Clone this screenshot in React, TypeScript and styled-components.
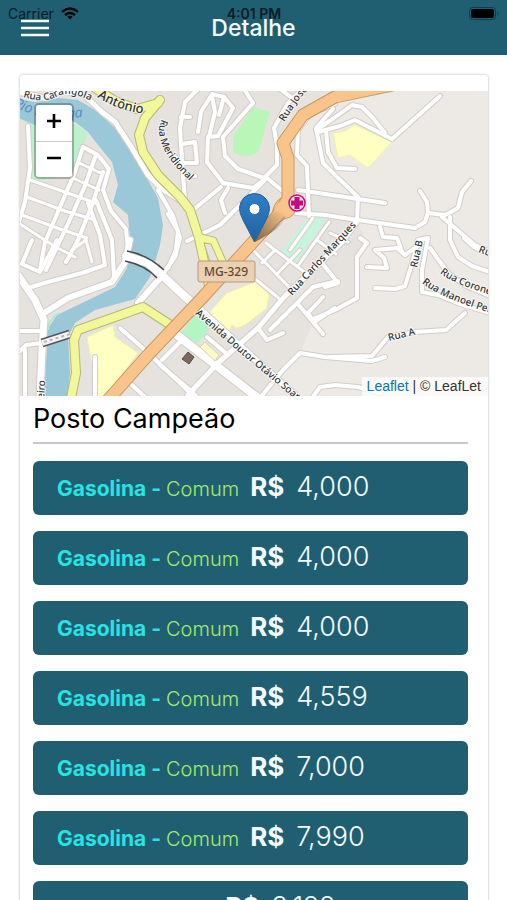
import React from "react";
import styled, { createGlobalStyle } from "styled-components";

const teal = "#205f72";

const GlobalStyle = createGlobalStyle`
  *, *::before, *::after { box-sizing: border-box; }
  html { height: 100%; overflow: hidden; }
  body {
    margin: 0;
    height: 100%;
    overflow: hidden;
    background: #fff;
    color: #000;
    font-family: Inter, "Liberation Sans", sans-serif;
  }
`;

/* ---------- header ---------- */

const Header = styled.header`
  position: relative;
  background: ${teal};
  height: 55px;
`;

const StatusBar = styled.div`
  position: absolute;
  inset: 0 0 auto 0;
  display: grid;
  grid-template-columns: 1fr auto 1fr;
  align-items: center;
  height: 27px;
  padding: 0 7px 0 8px;
  font-size: 14px;
  line-height: 27px;
  color: #0b1c24;
  pointer-events: none;
`;

const Carrier = styled.span`
  display: flex;
  align-items: center;
  gap: 7px;
`;

const Clock = styled.span`
  font-weight: 600;
`;

const BatteryIcon = styled.svg`
  justify-self: end;
`;

const NavBar = styled.div`
  display: grid;
  grid-template-columns: 1fr auto 1fr;
  align-items: center;
  height: 55px;
  padding: 0 21px;
`;

const MenuButton = styled.button`
  justify-self: start;
  display: block;
  border: 0;
  padding: 0;
  background: none;
  line-height: 0;
  cursor: pointer;
`;

const Title = styled.h1`
  margin: 0;
  font-size: 23px;
  font-weight: 500;
  line-height: 28px;
  color: #f4fbff;
`;

/* ---------- card ---------- */

const Card = styled.main`
  margin: 20px 19px 0 20px;
  padding-top: 16px;
  border-radius: 3px;
  box-shadow: 0 0 3px rgba(0, 0, 0, 0.3);
`;

const MapFrame = styled.section`
  position: relative;
  height: 305px;
  overflow: hidden;
  background: #edeae6;
`;

const MapDrawing = styled.svg`
  display: block;
  width: 100%;
  height: 100%;
`;

const ZoomControl = styled.div`
  position: absolute;
  top: 12px;
  left: 14px;
  display: grid;
  width: 40px;
  border: 2px solid rgba(0, 0, 0, 0.25);
  border-radius: 5px;
  background-clip: padding-box;
  overflow: hidden;
`;

const ZoomButton = styled.button`
  display: grid;
  place-items: center;
  height: 36px;
  padding: 0 0 4px;
  border: 0;
  background: #fff;
  cursor: pointer;

  & + & {
    border-top: 1px solid #ccc;
  }
`;

const Attribution = styled.div`
  position: absolute;
  right: 0;
  bottom: 0;
  padding: 0 7px 0 5px;
  background: rgba(255, 255, 255, 0.75);
  color: #333;
  font-family: "Liberation Sans", sans-serif;
  font-size: 14px;
  line-height: 19px;
`;

const AttributionLink = styled.a`
  color: #0078a8;
  text-decoration: none;
`;

const Details = styled.section`
  padding: 0 20px 0 13px;
`;

const StationName = styled.h2`
  margin: 0;
  border-bottom: 2px solid #c8c8c8;
  font-size: 27px;
  font-weight: 400;
  line-height: 46px;
`;

const PriceList = styled.ul`
  display: grid;
  gap: 16px;
  margin: 17px 0 0;
  padding: 0;
  list-style: none;
`;

const PriceRow = styled.li`
  display: flex;
  align-items: baseline;
  height: 54px;
  padding: 0 24px;
  border-radius: 6px;
  background: ${teal};
  line-height: 52px;
  white-space: nowrap;
`;

const Fuel = styled.strong`
  margin-right: 5px;
  font-size: 21px;
  font-weight: 700;
  color: #29e3e3;
`;

const Grade = styled.span`
  font-size: 20px;
  font-weight: 350;
  color: #a5ea6c;
`;

const Currency = styled.strong`
  margin: 0 12px 0 11px;
  font-size: 26px;
  font-weight: 700;
  color: #f4fbff;
`;

const Price = styled.span`
  font-size: 27px;
  font-weight: 300;
  color: #f4fbff;
`;

/* ---------- map data ---------- */

type Road = [path: string, width: number];

const streets: Road[] = [
  ["M18 92 L45 98 L60 91 L82 93 L102 112 L115 122 L132 148 L148 175 L162 189 L181 201", 5],
  ["M158 190 L173 216 L180 238 L175 257 L162 275", 4],
  ["M28 126 L30 168 L25 202 L18 225", 4],
  ["M83 147 L75 172 L60 207 L45 242 L40 270", 4],
  ["M96 155 L84 188 L72 215 L57 247 L46 270", 4],
  ["M103 172 L92 205 L78 240 L66 262", 4],
  ["M83 147 L98 155 L109 169 L103 190 L111 211 L126 229 L128 250", 4],
  ["M30 180 L62 191 L98 204", 3],
  ["M27 197 L65 211 L92 219", 3],
  ["M22 215 L60 229 L87 238", 3],
  ["M20 224 L54 246 L75 257", 3],
  ["M79 163 L103 174", 3],
  ["M73 178 L99 190", 3],
  ["M88 203 L100 235 L105 265 L82 273 L48 282 L28 288", 4],
  ["M96 200 L112 240 L114 277", 4],
  ["M57 240 L40 272 L22 264 L32 240", 4],
  ["M72 250 L86 240 L92 262", 3],
  ["M18 275 L35 300 L44 320 L42 350 L40 398", 7],
  ["M44 313 L68 298 L112 282 L125 262 L130 240", 6],
  ["M18 331 L42 331", 4],
  ["M18 353 L26 345 L42 343 M25 350 L25 398", 4],
  ["M126 256 L148 263 L162 275 L180 292 L200 310", 8],
  ["M162 276 L138 303", 6],
  ["M120 328 L145 350 L180 383 L195 398", 4],
  ["M132 385 L146 398 M95 357 L95 398", 4],
  ["M177 335 L258 398", 8],
  ["M195 305 L298 398", 6],
  ["M180 342 L162 360 M160 365 L190 390 L198 398", 4],
  ["M197 90 L185 102 L180 128 L183 175 L185 200", 4],
  ["M182 144 L195 142 L197 163 L183 163 M181 117 L190 117 M183 175 L195 176 M170 153 L183 163", 4],
  ["M198 132 L201 112 L212 94 L224 97 L233 108 L218 136 L208 137 L207 162 L223 183 L253 188 L267 178 L284 192", 4],
  ["M212 96 L215 112 L209 137 M224 97 L219 115", 4],
  ["M244 89 L253 103 L223 137 L225 156 L238 169 L264 178 L277 165 L277 145 L274 128 L288 103 L302 90", 4],
  ["M276 86 L291 97", 4],
  ["M221 187 L193 210 M228 188 L221 200 L225 213 M264 181 L220 225 L187 241", 4],
  ["M168 214 L178 231 L176 250 L168 268", 4],
  ["M335 104 L310 114 L298 130 L297 155 L307 166 L309 216", 4],
  ["M333 109 L316 128 L323 163 L335 175 L358 197 L357 221", 4],
  ["M316 130 L334 118 L352 105 L362 107 L373 118 L385 133", 4],
  ["M318 132 L340 126 L355 120 L392 139 L440 96", 4],
  ["M326 130 L328 152 L337 168 L355 169", 4],
  ["M298 190 L325 194 L385 203", 4],
  ["M296 213 L325 215 L358 220 L415 228 L425 222 L428 213 L445 215 L458 208 L462 192 L471 181", 4],
  ["M428 213 L427 202 L420 191 M442 217 L475 245 L490 252", 4],
  ["M450 217 L450 240 L458 257 L472 266 L490 272", 4],
  ["M380 227 L383 237 L397 238 L402 252", 4],
  ["M357 221 L342 242 L284 297 L258 328 L218 363 L188 395", 5],
  ["M313 218 L290 250 M298 266 L329 222 M330 233 L348 242 M317 240 L336 254", 3],
  ["M253 250 L290 288 M266 243 L307 274 M262 263 L274 251 M277 274 L300 250 M253 277 L281 300", 3],
  ["M258 328 L267 340 L283 333", 4],
  ["M325 287 L338 283 L322 263 M338 281 L313 287 L293 307 L270 330", 4],
  ["M297 303 L313 322 L323 334 M323 297 L308 313 L314 322 L335 308", 4],
  ["M260 398 L283 370 L300 353 L325 357 L372 361 L385 357 M330 357 L372 356 L388 337 L415 332 L446 330 L465 313", 4],
  ["M312 398 L320 387 L335 385 L358 387 L380 393", 4],
  ["M207 337 L228 355", 4],
  ["M315 318 L335 310 L357 298 L357 257 L367 243 L360 238", 4],
  ["M367 267 L387 268 L384 258 L375 250 L397 248 L405 255 L422 243", 4],
  ["M375 288 L395 289 L405 286 L413 260 L418 240 L428 238 L422 270 L422 292 L438 295 L460 304 L490 313", 4],
  ["M430 248 L448 273 L466 286 L490 296 M464 238 L474 247 L490 255", 4],
];

const yellowRoads: Road[] = [
  ["M92 86 L115 101 L137 109 L158 103", 8],
  ["M160 100 L145 118 L139 135 L143 152 L158 175 L180 197 L190 210 L199 238 L209 285", 8],
  ["M201 238 L213 241 L224 266", 7],
  ["M172 326 L143 307 L115 317 L78 330 L74 340 L76 373 L71 398", 8],
];

const trunkRoads: Road[] = [
  ["M108 400 L148 355 L203 297 L253 242 L280 213 L288 198 L288 158 L283 143 L303 115 L335 97 L397 84", 11],
];

type Label = { id: string; d: string; text: string; size?: number };

const labels: Label[] = [
  { id: "carangola", d: "M23 97 Q44 104 58 96 Q72 89 100 106", text: "Rua Carangola" },
  { id: "antonio", d: "M97 97 Q118 111 148 114", text: "Antônio", size: 13 },
  { id: "meridional", d: "M162 119 Q148 146 200 190", text: "Rua Meridional" },
  { id: "jose", d: "M284 122 L300 98 L322 76", text: "Rua José C" },
  { id: "marques", d: "M292 296 L365 216", text: "Rua Carlos Marques" },
  { id: "avenida", d: "M195 314 L246 358 L330 428", text: "Avenida Doutor Otávio Soares" },
  { id: "ruab", d: "M417 268 L424 236", text: "Rua B" },
  { id: "ruaa", d: "M389 341 L425 332", text: "Rua A" },
  { id: "coronel", d: "M440 273 Q458 288 525 304", text: "Rua Coronel" },
  { id: "manoel", d: "M422 283 Q446 303 535 325", text: "Rua Manoel Pereira" },
  { id: "ru", d: "M478 252 L510 264", text: "Rua" },
  { id: "iro", d: "M44 399 L46 365", text: "eiro" },
];

const RoadLayer = ({ roads, casing, fill }: { roads: Road[]; casing: string; fill: string }) => (
  <g fill="none" strokeLinecap="round" strokeLinejoin="round">
    {roads.map(([d, w]) => (
      <path key={"c" + d} d={d} stroke={casing} strokeWidth={w + 2} />
    ))}
    {roads.map(([d, w]) => (
      <path key={"f" + d} d={d} stroke={fill} strokeWidth={w} />
    ))}
  </g>
);

const StreetMap = () => (
  <MapDrawing viewBox="20 91 468 305" preserveAspectRatio="xMidYMid slice" role="img" aria-label="Mapa do posto">
    <defs>
      <linearGradient id="pin" x1="0" y1="0" x2="0" y2="1">
        <stop offset="0" stopColor="#2e7fcb" />
        <stop offset="1" stopColor="#22639f" />
      </linearGradient>
      <linearGradient id="pinShadow" x1="0" y1="1" x2="1" y2="0">
        <stop offset="0" stopColor="#000" stopOpacity="0.5" />
        <stop offset="1" stopColor="#000" stopOpacity="0" />
      </linearGradient>
    </defs>
    <rect x="20" y="91" width="468" height="305" fill="#edeae6" />
    <path
      d="M18 91 H340 L335 97 L298 130 L297 155 L307 166 L309 192 L358 198 L357 221 L367 243 L357 257 L357 298 L315 318 L300 353 L260 398 H18Z"
      fill="#e6e2de"
    />

    <path d="M18 116 L35 122 L75 124 L88 134 L74 166 L72 175 L31 182 L30 126Z" fill="#bdf0cc" />
    <path d="M253 107 L270 112 L259 150 Q250 161 233 152 V137Z" fill="#b8f7b8" />
    <path d="M307 218 L326 218 L297 262 L281 252Z" fill="#c6f5dc" />
    <path d="M195 315 L211 328 L197 344 L182 332Z" fill="#b4f5c4" />
    <g fill="#ffffc4" stroke="#f3f3a0" strokeWidth="1">
      <path d="M333 133 L345 131 L355 125 L392 142 L368 168 L350 155 L338 158Z" />
      <path d="M208 314 L227 293 L240 288 L255 282 L269 294 L267 308 L245 325 L237 328 L232 325 L228 334 L220 329 Z" />
      <path d="M87 337 L113 325 L115 337 L138 353 L104 398 H98 L93 370Z" />
    </g>

    <path
      d="M18 99 L35 102 L58 98 L78 100 L95 110 L115 128 L132 152 L145 175 L158 198 L163 225 L160 245 L155 262 L150 277 L135 299 L95 310 L75 323 L68 337 L70 373 L67 398 L43 398 L47 350 L47 330 L57 315 L82 303 L115 287 L127 268 L130 240 L128 215 L113 202 L118 185 L112 162 L98 145 L88 132 L75 122 L35 125 L18 118Z"
      fill="#9ac8d8"
    />
    <path d="M48 330 Q48 320 59 313" fill="none" stroke="#a9eccb" strokeWidth="2" />

    <RoadLayer roads={streets} casing="#d1cdca" fill="#fff" />
    <path d="M205 342 L219 355 L215 361 L200 347Z" fill="#fbf9c8" stroke="#d9d5a8" />
    <g fill="none" stroke="#4a4a4a" strokeWidth="1.5">
      <path d="M127 251 Q148 255 164 270 M125 261 Q145 265 157 278" />
    </g>
    <path d="M42 343 L70 334" stroke="#555" strokeWidth="9" />
    <path d="M42 343 L70 334" stroke="#f4f2f2" strokeWidth="6" />
    <path d="M44 342 L70 334" stroke="#b9b4b4" strokeWidth="2" strokeDasharray="3 3" />
    <RoadLayer roads={yellowRoads} casing="#b7b676" fill="#f2f79a" />
    <path d="M204 243 L211 244 L219 262 L210 262Z" fill="#e6e2de" stroke="#b7b676" />
    <path d="M268 230 L273 210 Q276 197 288 196 L296 204 Q297 217 284 219 L274 226Z" fill="#f9c48b" stroke="#c79a59" />
    <RoadLayer roads={trunkRoads} casing="#c79a59" fill="#f9c48b" />
    <path d="M274 212 Q277 200 288 198 L294 204 Q295 215 283 217 L275 222Z" fill="#f9c48b" />
    <path d="M188 352 L194 357 L189 364 L182 359Z" fill="#7a685f" stroke="#5d4e47" />

    <g
      fontFamily='"Noto Sans", "Open Sans", sans-serif'
      fontSize="10"
      fontWeight="500"
      fill="#333"
      stroke="#fff"
      strokeWidth="2"
      strokeOpacity="0.7"
      paintOrder="stroke"
    >
      {labels.map(({ id, d, text, size }) => (
        <React.Fragment key={id}>
          <path id={id} d={d} fill="none" stroke="none" />
          <text fontSize={size}>
            <textPath href={"#" + id}>{text}</textPath>
          </text>
        </React.Fragment>
      ))}
    </g>
    <path id="rio" d="M13 106 Q45 124 96 115" fill="none" />
    <text fontFamily='"Noto Sans", sans-serif' fontSize="14" fontStyle="italic" fill="#5b8fc0">
      <textPath href="#rio">Rio Piranga</textPath>
    </text>

    <rect x="198" y="261" width="57" height="21" rx="2" fill="#ecd0b4" stroke="#b69a7b" />
    <text
      x="226"
      y="276"
      textAnchor="middle"
      fontFamily='"Noto Sans", sans-serif'
      fontSize="12"
      fontWeight="500"
      fill="#5e4a33"
    >
      MG-329
    </text>

    <circle cx="297" cy="203" r="8" fill="#fbe3f1" stroke="#c9077f" strokeWidth="1.5" />
    <path d="M294.500 197 h5 v3.500 h3.500 v5 h-3.500 v3.500 h-5 v-3.500 h-3.500 v-5 h3.500Z" fill="#c9077f" />

    <path d="M255 242 L264 222 Q275 207 284 213 Q287 222 271 233Z" fill="url(#pinShadow)" />
    <path
      d="M254.500 242 L243 220 Q239.500 213 239.500 208.500 A15 15 0 0 1 269.500 208.500 Q269.500 213 266 220Z"
      fill="url(#pin)"
      stroke="#245f9a"
    />
    <circle cx="254.500" cy="209" r="5.500" fill="#fff" stroke="#2467a8" />
  </MapDrawing>
);

const prices = [
  { fuel: "Gasolina", grade: "Comum", price: "4,000" },
  { fuel: "Gasolina", grade: "Comum", price: "4,000" },
  { fuel: "Gasolina", grade: "Comum", price: "4,000" },
  { fuel: "Gasolina", grade: "Comum", price: "4,559" },
  { fuel: "Gasolina", grade: "Comum", price: "7,000" },
  { fuel: "Gasolina", grade: "Comum", price: "7,990" },
  { fuel: "Etanol", grade: "Comum", price: "3,199" },
];

export default function App() {
  return (
    <>
      <GlobalStyle />
      <Header>
        <NavBar>
          <MenuButton type="button" aria-label="Menu">
            <svg width="28" height="18" viewBox="0 0 28 18" stroke="#f4fbff" strokeWidth="2.400">
              <path d="M0 2H28M0 9H28M0 16H28" />
            </svg>
          </MenuButton>
          <Title>Detalhe</Title>
        </NavBar>
        <StatusBar>
          <Carrier>
            Carrier
            <svg width="18" height="13" viewBox="0 0 18 13" fill="none" stroke="#000" strokeWidth="2.400">
              <path d="M1 4.800Q9 -2 17 4.800M4 8Q9 3.800 14 8" />
              <path d="M9 12.500L6.300 9.800Q9 7.800 11.700 9.800Z" fill="#000" stroke="none" />
            </svg>
          </Carrier>
          <Clock>4:01 PM</Clock>
          <BatteryIcon width="31" height="14" viewBox="0 0 31 14">
            <rect x="0.500" y="0.500" width="26" height="12" rx="3" fill="none" stroke="#123a48" />
            <rect x="2" y="2" width="23" height="9" rx="2" fill="#000" />
            <path d="M28.500 4.500Q30.500 6.500 28.500 8.500Z" fill="#123a48" />
          </BatteryIcon>
        </StatusBar>
      </Header>
      <Card>
        <MapFrame>
          <StreetMap />
          <ZoomControl>
            <ZoomButton type="button" aria-label="Aproximar">
              <svg width="14" height="14" viewBox="0 0 14 14" stroke="#000" strokeWidth="2.600">
                <path d="M0 7H14M7 0V14" />
              </svg>
            </ZoomButton>
            <ZoomButton type="button" aria-label="Afastar">
              <svg width="14" height="14" viewBox="0 0 14 14" stroke="#000" strokeWidth="2.600">
                <path d="M0 7H14" />
              </svg>
            </ZoomButton>
          </ZoomControl>
          <Attribution>
            <AttributionLink href="#leaflet">Leaflet</AttributionLink> | © LeafLet
          </Attribution>
        </MapFrame>
        <Details>
          <StationName>Posto Campeão</StationName>
          <PriceList>
            {prices.map(({ fuel, grade, price }, i) => (
              <PriceRow key={i}>
                <Fuel>{fuel} -</Fuel>
                <Grade>{grade}</Grade>
                <Currency>R$</Currency>
                <Price>{price}</Price>
              </PriceRow>
            ))}
          </PriceList>
        </Details>
      </Card>
    </>
  );
}
